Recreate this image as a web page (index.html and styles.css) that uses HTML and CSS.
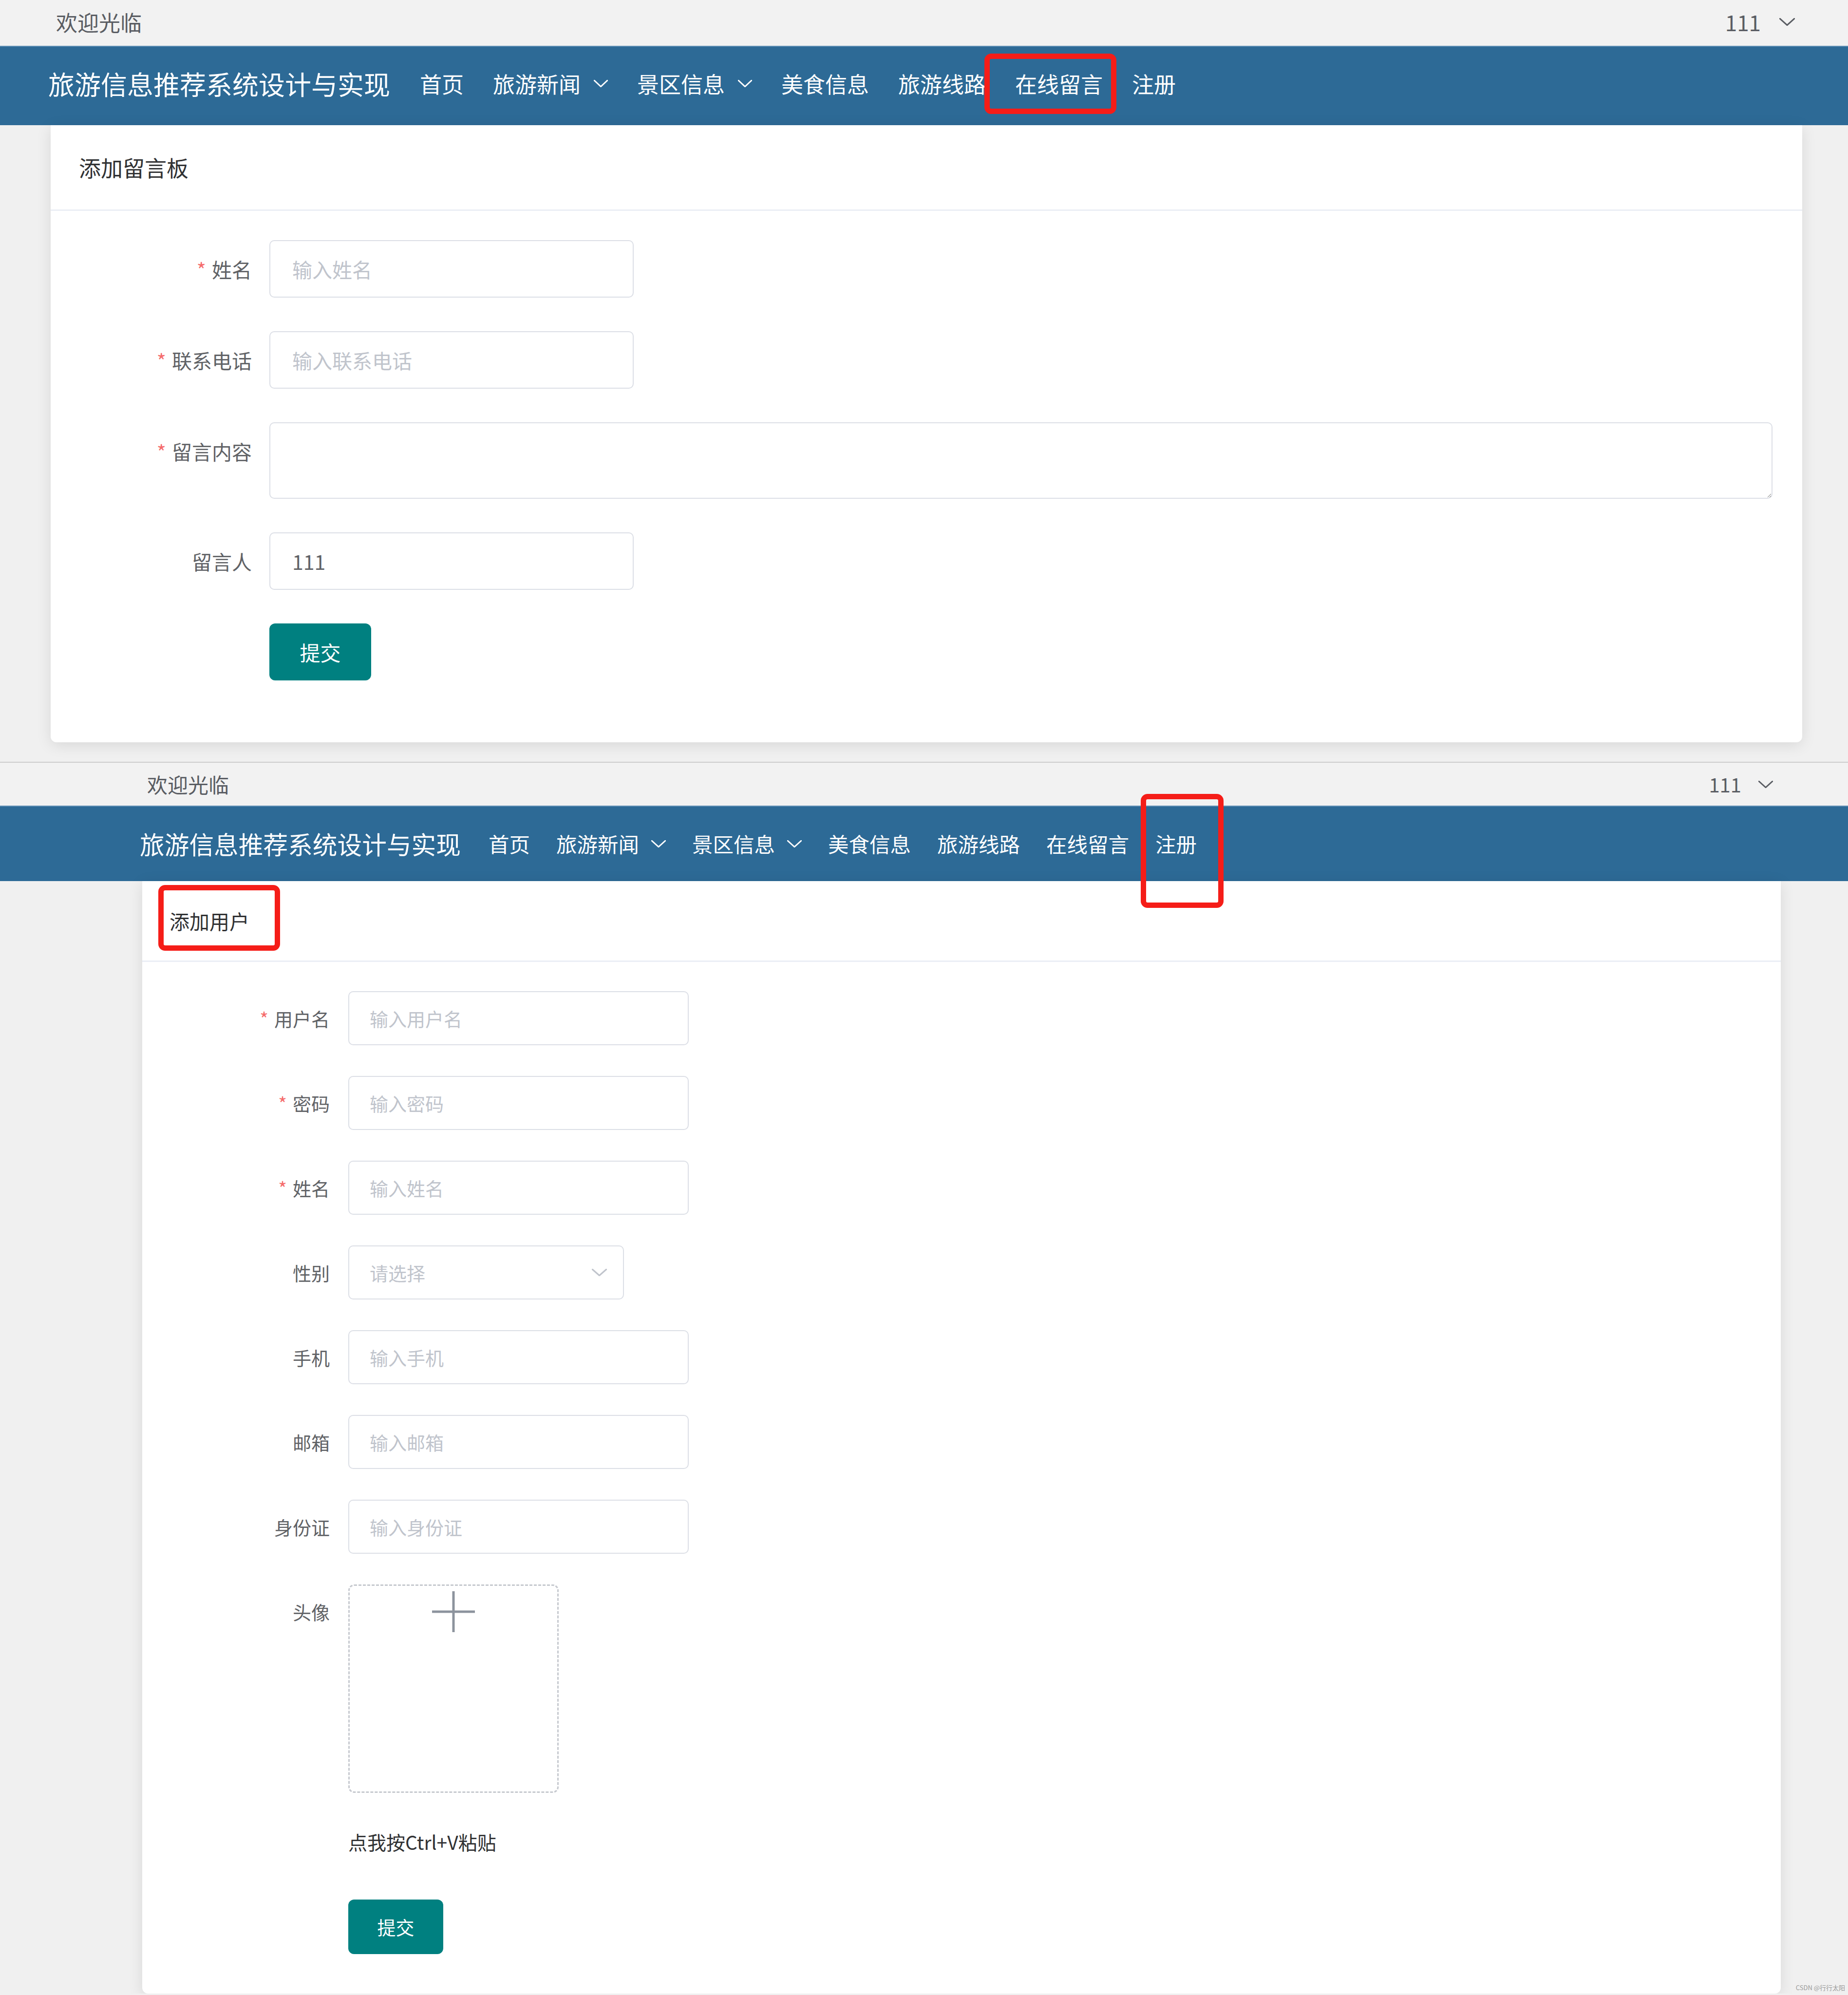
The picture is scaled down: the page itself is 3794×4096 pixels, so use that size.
FILE: index.html
```html
<!DOCTYPE html>
<html lang="zh-CN">
<head>
<meta charset="utf-8">
<title>旅游信息推荐系统设计与实现</title>
<link rel="stylesheet" href="styles.css">
</head>
<body>
<section class="shot shot-a">
  <div class="topbar">
    <span class="welcome">欢迎光临</span>
    <span class="user">111<svg class="chev chev-top" viewBox="0 0 24 12" preserveAspectRatio="none"><polyline points="1,1 12,11 23,1"/></svg></span>
  </div>
  <nav class="navbar">
    <span class="brand">旅游信息推荐系统设计与实现</span>
    <a class="nav-item">首页</a>
    <a class="nav-item">旅游新闻<svg class="chev chev-nav" viewBox="0 0 24 12" preserveAspectRatio="none"><polyline points="1,1 12,11 23,1"/></svg></a>
    <a class="nav-item">景区信息<svg class="chev chev-nav" viewBox="0 0 24 12" preserveAspectRatio="none"><polyline points="1,1 12,11 23,1"/></svg></a>
    <a class="nav-item">美食信息</a>
    <a class="nav-item">旅游线路</a>
    <a class="nav-item">在线留言</a>
    <a class="nav-item">注册</a>
  </nav>
  <main class="card">
    <div class="card-header">添加留言板</div>
    <form class="card-body">
      <div class="form-item">
        <label class="form-label required">姓名</label>
        <div class="form-content"><input class="input" placeholder="输入姓名"></div>
      </div>
      <div class="form-item">
        <label class="form-label required">联系电话</label>
        <div class="form-content"><input class="input" placeholder="输入联系电话"></div>
      </div>
      <div class="form-item">
        <label class="form-label required">留言内容</label>
        <div class="form-content grow"><textarea class="input textarea"></textarea></div>
      </div>
      <div class="form-item">
        <label class="form-label">留言人</label>
        <div class="form-content"><input class="input" value="111"></div>
      </div>
      <div class="form-item">
        <span class="form-label"></span>
        <div class="form-content"><button type="button" class="btn">提交</button></div>
      </div>
    </form>
  </main>
  <div class="mark mark-a"></div>
</section>
<div class="shot-sep"></div>
<section class="shot shot-b">
  <div class="topbar">
    <span class="welcome">欢迎光临</span>
    <span class="user">111<svg class="chev chev-top" viewBox="0 0 24 12" preserveAspectRatio="none"><polyline points="1,1 12,11 23,1"/></svg></span>
  </div>
  <nav class="navbar">
    <span class="brand">旅游信息推荐系统设计与实现</span>
    <a class="nav-item">首页</a>
    <a class="nav-item">旅游新闻<svg class="chev chev-nav" viewBox="0 0 24 12" preserveAspectRatio="none"><polyline points="1,1 12,11 23,1"/></svg></a>
    <a class="nav-item">景区信息<svg class="chev chev-nav" viewBox="0 0 24 12" preserveAspectRatio="none"><polyline points="1,1 12,11 23,1"/></svg></a>
    <a class="nav-item">美食信息</a>
    <a class="nav-item">旅游线路</a>
    <a class="nav-item">在线留言</a>
    <a class="nav-item">注册</a>
  </nav>
  <main class="card">
    <div class="card-header">添加用户</div>
    <form class="card-body">
      <div class="form-item">
        <label class="form-label required">用户名</label>
        <div class="form-content"><input class="input" placeholder="输入用户名"></div>
      </div>
      <div class="form-item">
        <label class="form-label required">密码</label>
        <div class="form-content"><input class="input" placeholder="输入密码"></div>
      </div>
      <div class="form-item">
        <label class="form-label required">姓名</label>
        <div class="form-content"><input class="input" placeholder="输入姓名"></div>
      </div>
      <div class="form-item">
        <label class="form-label">性别</label>
        <div class="form-content">
          <div class="input select"><span class="select-ph">请选择</span><svg class="chev chev-select" viewBox="0 0 24 12" preserveAspectRatio="none"><polyline points="1,1 12,11 23,1"/></svg></div>
        </div>
      </div>
      <div class="form-item">
        <label class="form-label">手机</label>
        <div class="form-content"><input class="input" placeholder="输入手机"></div>
      </div>
      <div class="form-item">
        <label class="form-label">邮箱</label>
        <div class="form-content"><input class="input" placeholder="输入邮箱"></div>
      </div>
      <div class="form-item">
        <label class="form-label">身份证</label>
        <div class="form-content"><input class="input" placeholder="输入身份证"></div>
      </div>
      <div class="form-item">
        <label class="form-label">头像</label>
        <div class="form-content">
          <div class="upload">
            <svg class="plus" viewBox="0 0 88 84"><line x1="0" y1="42" x2="88" y2="42"/><line x1="44" y1="0" x2="44" y2="84"/></svg>
          </div>
          <div class="paste-tip">点我按Ctrl+V粘贴</div>
        </div>
      </div>
      <div class="form-item">
        <span class="form-label"></span>
        <div class="form-content"><button type="button" class="btn">提交</button></div>
      </div>
    </form>
  </main>
  <div class="mark mark-b1"></div>
  <div class="mark mark-b2"></div>
  <span class="watermark">CSDN @行行太阳</span>
</section>
</body>
</html>
```

FILE: styles.css
```css
* {
  box-sizing: border-box;
}

html,
body {
  margin: 0;
  padding: 0;
}

body {
  width: 3794px;
  background: #f0f0f0;
  font-family: "Noto Sans CJK SC", "Noto Sans", "Liberation Sans", sans-serif;
  color: #606266;
  overflow: hidden;
}

.shot {
  position: relative;
}

/* ---------- top bar ---------- */
.topbar {
  display: flex;
  justify-content: space-between;
  align-items: center;
  background: #f2f2f2;
  color: #5a5d63;
  line-height: 1;
}

.user {
  display: flex;
  align-items: center;
}

.chev {
  display: block;
  fill: none;
  stroke: currentColor;
}

.chev polyline {
  vector-effect: non-scaling-stroke;
  stroke-width: 3;
  stroke-linecap: round;
  stroke-linejoin: round;
}

/* ---------- nav ---------- */
.navbar {
  display: flex;
  align-items: center;
  background: #2d6a96;
  color: #ffffff;
  line-height: 1;
  border-top: 2px solid #5f8fb5;
}

.brand {
  white-space: nowrap;
}

.nav-item {
  display: flex;
  align-items: center;
  white-space: nowrap;
}

/* ---------- card ---------- */
.card {
  background: #ffffff;
  border-radius: 0 0 12px 12px;
  box-shadow: 0 6px 30px rgba(0, 0, 0, 0.10);
}

.card-header {
  display: flex;
  align-items: center;
  color: #303133;
  border-bottom: 3px solid #ebeef5;
  line-height: 1;
}

.form-item {
  display: flex;
  align-items: flex-start;
}

.form-label {
  flex: none;
  text-align: right;
  color: #606266;
  white-space: nowrap;
}

.form-label.required::before {
  content: "*";
  color: #f56c6c;
  margin-right: 12px;
}

.form-content {
  display: flex;
  flex-direction: column;
  align-items: flex-start;
}

.form-content.grow {
  flex: 1;
  align-items: stretch;
}

.input {
  display: block;
  border: 2px solid #dcdfe6;
  border-radius: 10px;
  background: #ffffff;
  font-family: inherit;
  color: #606266;
  outline: none;
  margin: 0;
}

.input::placeholder {
  color: #c0c4cc;
}

.textarea {
  width: 100%;
  resize: vertical;
  padding: 20px 45px;
}

.select {
  display: flex;
  align-items: center;
  justify-content: space-between;
  color: #c0c4cc;
}

.chev-select {
  color: #c0c4cc;
}

.btn {
  display: block;
  border: none;
  background: #008080;
  color: #ffffff;
  border-radius: 12px;
  font-family: inherit;
  line-height: 1;
  padding: 0;
}

.upload {
  display: flex;
  justify-content: center;
  align-items: flex-start;
  border: 3px dashed #c6c9cf;
  border-radius: 12px;
  background: #ffffff;
}

.plus {
  display: block;
  stroke: #8c939d;
  stroke-width: 5;
}

.paste-tip {
  color: #303133;
  white-space: nowrap;
}

/* ---------- annotations ---------- */
.mark {
  position: absolute;
  border: 11px solid #f51d18;
  border-radius: 14px;
  pointer-events: none;
}

.watermark {
  position: absolute;
  right: 6px;
  bottom: 6px;
  font-size: 13px;
  color: #9a9a9a;
  line-height: 1;
}

.shot-sep {
  height: 2px;
  background: #cdcdcd;
}

/* ---------- first screenshot (留言板) ---------- */
.shot-a {
  padding-bottom: 40px;
}

.shot-a .topbar {
  height: 94px;
  padding: 0 109px 5px 115px;
  font-size: 44px;
}

.shot-a .user {
  gap: 38px;
}

.shot-a .chev-top {
  width: 32px;
  height: 16px;
}

.shot-a .navbar {
  height: 163px;
  padding-left: 99px;
  padding-bottom: 10px;
}

.shot-a .brand {
  font-size: 54px;
  margin-right: 31px;
}

.shot-a .nav-item {
  font-size: 45px;
  padding: 0 30px;
}

.shot-a .chev-nav {
  width: 29px;
  height: 15px;
  margin-left: 27px;
}

.shot-a .card {
  margin: 0 94px 0 104px;
}

.shot-a .card-header {
  height: 176px;
  padding-left: 58px;
  font-size: 45px;
}

.shot-a .card-body {
  display: block;
  padding: 60px 61px 58px 0;
}

.shot-a .form-item {
  margin-bottom: 69px;
}

.shot-a .form-label {
  width: 449px;
  padding-right: 36px;
  line-height: 118px;
  font-size: 41px;
}

.shot-a .input {
  width: 748px;
  height: 118px;
  padding: 0 45px;
  font-size: 41px;
}

.shot-a .textarea {
  width: 100%;
  height: 157px;
}

.shot-a .btn {
  width: 209px;
  height: 117px;
  font-size: 42px;
}

.mark-a {
  left: 2021px;
  top: 110px;
  width: 271px;
  height: 124px;
}

/* ---------- second screenshot (添加用户) ---------- */
.shot-b .topbar {
  height: 88px;
  padding: 0 154px 0 302px;
  font-size: 42px;
}

.shot-b .user {
  gap: 35px;
  font-size: 40px;
}

.shot-b .chev-top {
  width: 30px;
  height: 15px;
}

.shot-b .navbar {
  height: 155px;
  padding-left: 287px;
}

.shot-b .brand {
  font-size: 50.7px;
  margin-right: 30px;
}

.shot-b .nav-item {
  font-size: 42.5px;
  padding: 0 27px;
}

.shot-b .chev-nav {
  width: 30px;
  height: 15px;
  margin-left: 25px;
}

.shot-b .card {
  margin: 0 138px 0 292px;
}

.shot-b .card-header {
  height: 166px;
  padding-left: 56px;
  font-size: 41px;
}

.shot-b .card-body {
  display: block;
  padding: 60px 0 18px 0;
}

.shot-b .form-item {
  margin-bottom: 63px;
}

.shot-b .form-label {
  width: 423px;
  padding-right: 38px;
  line-height: 111px;
  font-size: 38px;
}

.shot-b .input {
  width: 699px;
  height: 111px;
  padding: 0 42px;
  font-size: 38px;
}

.shot-b .select {
  width: 566px;
  padding-right: 33px;
}

.chev-select {
  width: 31px;
  height: 15px;
}

.shot-b .upload {
  width: 432px;
  height: 428px;
  padding-top: 11px;
}

.shot-b .plus {
  width: 88px;
  height: 84px;
}

.shot-b .paste-tip {
  margin-top: 45px;
  line-height: 111px;
  font-size: 39px;
}

.shot-b .btn {
  width: 195px;
  height: 112px;
  font-size: 38px;
}

.mark-b1 {
  left: 2342px;
  top: 64px;
  width: 170px;
  height: 234px;
}

.mark-b2 {
  left: 325px;
  top: 251px;
  width: 250px;
  height: 135px;
}
```
